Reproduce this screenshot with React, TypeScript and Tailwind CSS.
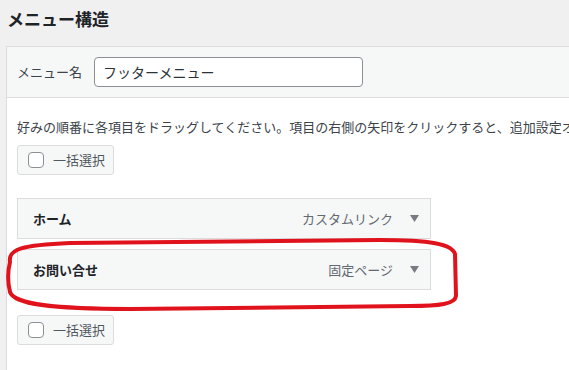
import React from "react";

const font = { fontFamily: '"Noto Sans CJK JP", "Noto Sans", sans-serif' };

function BulkButton() {
  return (
    <div className="flex h-[30px] w-[97px] items-center rounded-[3px] border border-[#dcdcde] bg-[#f6f7f7] pl-[10px]">
      <span className="block h-[16px] w-[16px] rounded-[4px] border border-[#8c8f94] bg-white" />
      <span className="ml-[9px] text-[13px] leading-[20px] text-[#50575e]">一括選択</span>
    </div>
  );
}

function Item({ title, type }: { title: string; type: string }) {
  return (
    <div className="flex h-[41px] w-[414px] items-center border border-[#dcdcde] bg-[#f6f7f7] pl-[15px] pr-[11px]">
      <span className="flex-1 text-[13px] font-bold leading-[20px] text-[#1d2327]">{title}</span>
      <span className="text-[13px] leading-[20px] text-[#646970]">{type}</span>
      <svg className="ml-[17px]" width="9" height="7" viewBox="0 0 9 7">
        <path d="M0 0 L9 0 L4.5 7 Z" fill="#787c82" />
      </svg>
    </div>
  );
}

export default function App() {
  return (
    <div className="relative h-[370px] w-[569px] overflow-hidden bg-[#f0f0f1]" style={font}>
      <h2 className="h-[46px] pl-[7px] pt-[7px] text-[17px] font-bold leading-[24px] text-[#1d2327]">
        メニュー構造
      </h2>
      <div className="ml-[6px] w-[700px] border border-[#dcdcde] bg-white">
        <div className="flex h-[51px] items-center border-b border-[#dcdcde] bg-[#f6f7f7] pl-[10px]">
          <span className="text-[13px] leading-[20px] text-[#3c434a]">メニュー名</span>
          <div className="ml-[12px] flex h-[30px] w-[269px] items-center rounded-[4px] border border-[#8c8f94] bg-white px-[8px] text-[14px] text-[#2c3338]">
            フッターメニュー
          </div>
        </div>
        <div className="pb-[40px] pl-[10px] pt-[19px]">
          <p className="whitespace-nowrap text-[13px] leading-[20px] text-[#3c434a]">
            好みの順番に各項目をドラッグしてください。項目の右側の矢印をクリックすると、追加設定オプションが表示されます。
          </p>
          <div className="mt-[8px]">
            <BulkButton />
          </div>
          <div className="mt-[23px] flex flex-col gap-[10px]">
            <Item title="ホーム" type="カスタムリンク" />
            <Item title="お問い合せ" type="固定ページ" />
          </div>
          <div className="mt-[25px]">
            <BulkButton />
          </div>
        </div>
      </div>
      <svg
        className="pointer-events-none absolute left-0 top-[230px]"
        width="470"
        height="90"
        viewBox="0 230 470 90"
      >
        <path
          d="M10 262 C 8 249, 22 245, 70 243 L 380 240 C 430 240, 452 244, 455 254 L 456 296 C 455 304, 440 306, 410 306 L 130 309 C 50 309, 14 304, 10 292 C 7 280, 8 270, 10 262 Z"
          fill="none"
          stroke="#e0131c"
          strokeWidth="4"
          strokeLinejoin="round"
        />
      </svg>
    </div>
  );
}
